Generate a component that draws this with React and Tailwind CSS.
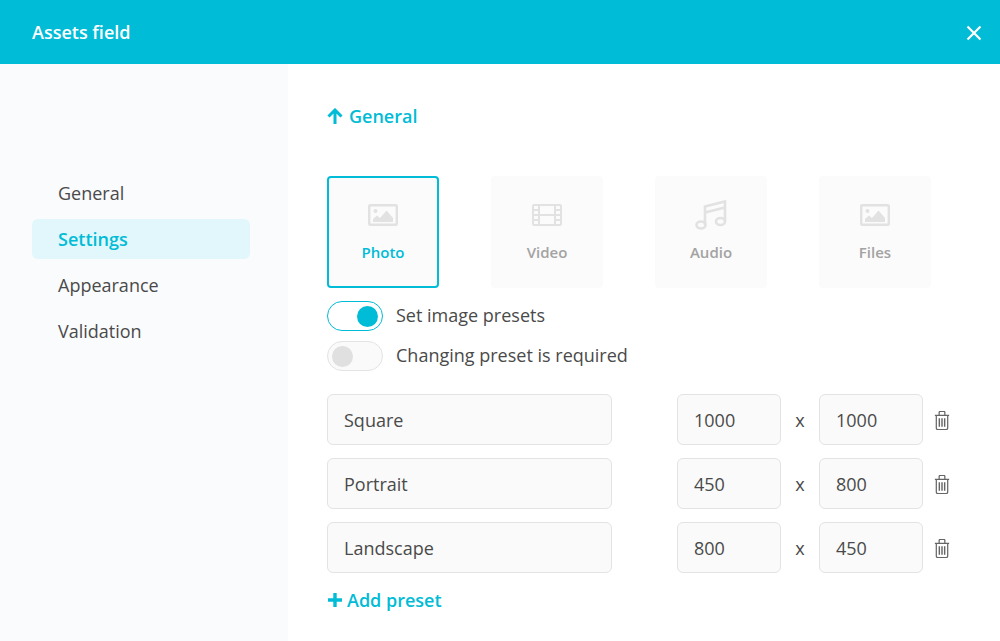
const ImageIcon = () => (
  <svg width="30" height="22" viewBox="0 0 30 22" className="text-[#e2e2e2]">
    <rect x="1.200" y="1.200" width="27.600" height="19.600" rx="1" fill="none" stroke="currentColor" strokeWidth="2.400" />
    <circle cx="7.500" cy="7" r="2" fill="currentColor" />
    <path d="M5 18v-3l4-3.500 3 2.500 6.500-7.500 6.500 7.500v4z" fill="currentColor" />
  </svg>
);

const FilmIcon = () => (
  <svg width="30" height="22" viewBox="0 0 30 22" fill="none" stroke="currentColor" strokeWidth="2" className="text-[#e2e2e2]">
    <rect x="1" y="1" width="28" height="20" rx="1" />
    <path d="M7 1v20M23 1v20M7 11h16M1 6h6M1 11h6M1 16h6M23 6h6M23 11h6M23 16h6" />
  </svg>
);

const MusicIcon = () => (
  <svg width="32" height="32" viewBox="0 0 32 32" fill="none" stroke="currentColor" strokeWidth="2.600" className="text-[#e2e2e2]">
    <path d="M10 26V7.500L30 2.500v20" />
    <path d="M10 13.500l20-5" />
    <ellipse cx="6" cy="26" rx="4.500" ry="3.500" />
    <ellipse cx="25.500" cy="22.500" rx="4.500" ry="3.500" />
  </svg>
);

const TrashIcon = () => (
  <svg width="16" height="19" viewBox="0 0 16 20" fill="none" stroke="#666" strokeWidth="1.300">
    <path d="M0.500 4.500h15M5 4.500V1.500q0-1 1-1h4q1 0 1 1v3" />
    <path d="M2 4.500v13.500q0 1.500 1.500 1.500h9q1.500 0 1.500-1.500V4.500" />
    <path d="M5.200 7.500v9M8 7.500v9M10.800 7.500v9" strokeWidth="1.500" />
  </svg>
);

const CloseIcon = () => (
  <svg width="16" height="16" viewBox="0 0 16 16" fill="none" stroke="white" strokeWidth="2.200">
    <path d="M1.500 1.500l13 13M14.500 1.500l-13 13" />
  </svg>
);

const UpArrowIcon = () => (
  <svg width="16" height="16" viewBox="0 0 16 16" fill="none" stroke="currentColor" strokeWidth="3">
    <path d="M8 16V2.500M1.500 8.500L8 2l6.500 6.500" />
  </svg>
);

const PlusIcon = () => (
  <svg width="16" height="14" viewBox="0 0 16 14" fill="none" stroke="currentColor" strokeWidth="3.400">
    <path d="M8 0v14M1 7h14" />
  </svg>
);

const tiles = [
  { label: "Photo", icon: <ImageIcon />, active: true },
  { label: "Video", icon: <FilmIcon /> },
  { label: "Audio", icon: <MusicIcon /> },
  { label: "Files", icon: <ImageIcon /> },
];

const navItems = ["General", "Settings", "Appearance", "Validation"];

const presets = [
  { name: "Square", w: "1000", h: "1000" },
  { name: "Portrait", w: "450", h: "800" },
  { name: "Landscape", w: "800", h: "450" },
];

const Field = ({ value, className }) => (
  <div className={`h-[51px] flex items-center pl-4 pt-[1px] bg-[#fafafa] border border-[#e3e3e3] rounded-md text-[18px] text-[#4a4a4a] ${className}`}>
    {value}
  </div>
);

export default function App() {
  return (
    <div className="w-[1000px] h-[641px] overflow-hidden bg-white font-['Open_Sans',sans-serif]">
      <header className="h-16 bg-[#00bcd6] flex items-center justify-between pl-8 pr-[18px]">
        <h1 className="text-[18px] font-semibold text-white">Assets field</h1>
        <div className="pt-[2px]">
          <CloseIcon />
        </div>
      </header>

      <div className="flex h-[577px]">
        <aside className="w-[288px] bg-[#fafbfd] pt-[109px] pl-8">
          <nav className="flex flex-col gap-[6px] w-[218px]">
            {navItems.map((item) => (
              <div
                key={item}
                className={`h-10 flex items-center pl-[26px] pt-[1px] rounded-md text-[18px] ${
                  item === "Settings" ? "bg-[#e1f7fb] text-[#00bcd6] font-semibold" : "text-[#4a4a4a]"
                }`}
              >
                {item}
              </div>
            ))}
          </nav>
        </aside>

        <main className="flex-1 pl-[39px] pt-[38px]">
          <div className="h-[28px] flex items-center gap-[6px] text-[18px] font-semibold text-[#00bcd6]">
            <UpArrowIcon />
            General
          </div>

          <div className="flex gap-[52px] mt-[46px]">
            {tiles.map((tile) => (
              <div
                key={tile.label}
                className={`w-[112px] h-[112px] rounded flex flex-col items-center bg-[#fbfbfb] ${
                  tile.active ? "border-2 border-[#00bcd6]" : ""
                }`}
              >
                <div className={`h-[32px] flex items-center justify-center ${tile.active ? "mt-[21px]" : "mt-[23px]"}`}>{tile.icon}</div>
                <span className={`mt-[10px] text-[15px] font-semibold ${tile.active ? "text-[#00bcd6]" : "text-[#a3a3a3]"}`}>
                  {tile.label}
                </span>
              </div>
            ))}
          </div>

          <div className="flex flex-col gap-[10px] mt-[13px]">
            <div className="h-[30px] flex items-center gap-[13px]">
              <div className="w-[56px] h-[30px] rounded-full border border-[#00bcd6] flex items-center justify-end pr-[4px]">
                <div className="w-[21px] h-[21px] rounded-full bg-[#00bcd6]" />
              </div>
              <span className="text-[18px] text-[#4a4a4a] -mt-[2px]">Set image presets</span>
            </div>
            <div className="h-[30px] flex items-center gap-[13px]">
              <div className="w-[56px] h-[30px] rounded-full border border-[#e3e3e3] bg-[#fafafa] flex items-center pl-[4px]">
                <div className="w-[21px] h-[21px] rounded-full bg-[#e0e0e0]" />
              </div>
              <span className="text-[18px] text-[#4a4a4a] -mt-[2px]">Changing preset is required</span>
            </div>
          </div>

          <div className="flex flex-col gap-[13px] mt-[23px]">
            {presets.map((preset) => (
              <div key={preset.name} className="flex items-center">
                <Field value={preset.name} className="w-[285px]" />
                <Field value={preset.w} className="w-[104px] ml-[65px]" />
                <span className="w-[38px] pt-[2px] text-center text-[18px] text-[#4a4a4a]">x</span>
                <Field value={preset.h} className="w-[104px]" />
                <div className="ml-[11px] pt-[1px]">
                  <TrashIcon />
                </div>
              </div>
            ))}
          </div>

          <div className="h-[28px] mt-[13px] flex items-center gap-[4px] text-[18px] font-semibold text-[#00bcd6]">
            <PlusIcon />
            Add preset
          </div>
        </main>
      </div>
    </div>
  );
}
